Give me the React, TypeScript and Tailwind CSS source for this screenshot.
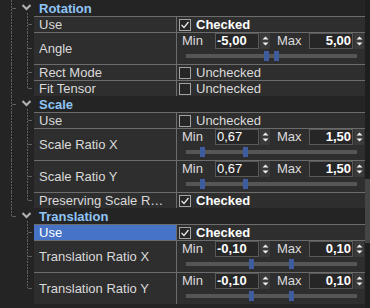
import React from "react";

type Range = { min: string; max: string; minBold: boolean; a: number; b: number };

type Row = {
  label: string;
  check?: boolean;
  selected?: boolean;
  range?: Range;
};

type Section = { title: string; last: boolean; rows: Row[] };

const sections: Section[] = [
  {
    title: "Rotation",
    last: false,
    rows: [
      { label: "Use", check: true },
      { label: "Angle", range: { min: "-5,00", max: "5,00", minBold: true, a: 78, b: 88 } },
      { label: "Rect Mode", check: false },
      { label: "Fit Tensor", check: false },
    ],
  },
  {
    title: "Scale",
    last: false,
    rows: [
      { label: "Use", check: false },
      { label: "Scale Ratio X", range: { min: "0,67", max: "1,50", minBold: false, a: 14, b: 57 } },
      { label: "Scale Ratio Y", range: { min: "0,67", max: "1,50", minBold: false, a: 14, b: 57 } },
      { label: "Preserving Scale Ratio", check: true },
    ],
  },
  {
    title: "Translation",
    last: true,
    rows: [
      { label: "Use", check: true, selected: true },
      { label: "Translation Ratio X", range: { min: "-0,10", max: "0,10", minBold: true, a: 63, b: 103 } },
      { label: "Translation Ratio Y", range: { min: "-0,10", max: "0,10", minBold: true, a: 63, b: 103 } },
    ],
  },
];

const LINE = "#5e5e5e";

const Chevron = ({ x }: { x: number }) => (
  <polyline
    points={`${x},5 ${x + 4},9 ${x + 8},5`}
    fill="none"
    stroke="#b4b4b4"
    strokeWidth="2"
  />
);

const HeaderGutter = ({ last }: { last: boolean }) => (
  <svg width="34" height="16" className="block shrink-0">
    <line x1="11.5" y1="0" x2="11.5" y2={last ? 8 : 16} stroke={LINE} strokeDasharray="2 1" />
    <line x1="12" y1="8.5" x2="16" y2="8.5" stroke={LINE} />
    <Chevron x={22.5} />
    <line x1="27.5" y1="13" x2="27.5" y2="16" stroke={LINE} strokeDasharray="2 1" />
  </svg>
);

const RowGutter = ({ h, outer, last }: { h: number; outer: boolean; last: boolean }) => (
  <svg width="34" height={h} className="block shrink-0">
    {outer && <line x1="11.5" y1="0" x2="11.5" y2={h} stroke={LINE} strokeDasharray="2 1" />}
    <line x1="27.5" y1="0" x2="27.5" y2={last ? h / 2 : h} stroke={LINE} strokeDasharray="2 1" />
    <line x1="28" y1={h / 2 + 0.5} x2="32" y2={h / 2 + 0.5} stroke={LINE} />
  </svg>
);

const CheckBox = ({ on }: { on: boolean }) => (
  <svg width="12" height="12" className="block shrink-0">
    <rect x="0.5" y="0.5" width="11" height="11" fill="#262626" stroke="#a2a2a2" />
    {on && <polyline points="2.5,6 5,8.5 9.5,3" fill="none" stroke="#e6e6e6" strokeWidth="1.3" />}
  </svg>
);

const Spinner = () => (
  <div className="w-[10px] h-[16px] ml-[1px] bg-[#3a3a3a] flex items-center justify-center">
    <svg width="7" height="10" className="block">
      <polygon points="0.5,3.5 3.5,0.5 6.5,3.5" fill="#f0f0f0" />
      <polygon points="0.5,6.5 3.5,9.5 6.5,6.5" fill="#f0f0f0" />
    </svg>
  </div>
);

const RangeCell = ({ r }: { r: Range }) => (
  <div className="flex flex-col">
    <div className="flex items-center h-[16px] pl-[5px] text-[13px] leading-[14px]">
      <span className="w-[33px] text-[#dcdcdc]">Min</span>
      <div
        className={`w-[44px] h-[16px] border border-[#595959] bg-[#262626] pl-[1px] text-white flex items-center ${
          r.minBold ? "font-bold" : "font-normal"
        }`}
      >
        {r.min}
      </div>
      <Spinner />
      <span className="w-[32px] ml-[7px] text-[#dcdcdc]">Max</span>
      <div className="w-[44px] h-[16px] border border-[#595959] bg-[#262626] pr-[1px] text-white font-bold flex items-center justify-end">
        {r.max}
      </div>
      <Spinner />
    </div>
    <div className="relative ml-[9px] mt-[5px] w-[171px] h-[4px] bg-[#565656]">
      <div className="absolute top-[-3px] w-[5px] h-[10px] bg-[#3e5d9c]" style={{ left: r.a }} />
      <div className="absolute top-[-3px] w-[5px] h-[10px] bg-[#3e5d9c]" style={{ left: r.b }} />
    </div>
  </div>
);

const PropRow = ({ row, outer, last }: { row: Row; outer: boolean; last: boolean }) => {
  const h = row.range ? 32 : 16;
  return (
    <div className="flex" style={{ height: h }}>
      <RowGutter h={h} outer={outer} last={last} />
      <div className="flex flex-1 border-t border-[#6c6c6c] bg-[#2e2e2e]">
        <div
          className={`w-[142px] shrink-0 pl-[5px] pr-[6px] flex items-center text-[13px] leading-[15px] ${
            row.selected ? "bg-[#4673c5] text-white" : "text-[#dadada]"
          }`}
        >
          <span className="truncate">{row.label}</span>
        </div>
        <div className="flex-1 border-l border-[#6c6c6c]">
          {row.range ? (
            <RangeCell r={row.range} />
          ) : (
            <div className="flex items-center h-full pl-[2px] gap-[5px] text-[13px] leading-[15px]">
              <CheckBox on={!!row.check} />
              <span className={row.check ? "font-bold text-white" : "text-[#dadada]"}>
                {row.check ? "Checked" : "Unchecked"}
              </span>
            </div>
          )}
        </div>
      </div>
    </div>
  );
};

export default function App() {
  return (
    <div className="w-[370px] h-[308px] overflow-hidden flex bg-[#242424] font-['Liberation_Sans',Arial,sans-serif]">
      <div className="w-[365px] shrink-0 flex flex-col">
        {sections.map((s) => (
          <div key={s.title} className="flex flex-col">
            <div className="flex h-[16px] items-center">
              <HeaderGutter last={s.last} />
              <span className="pl-[5px] text-[13px] leading-[15px] font-bold text-[#8fc4f6]">{s.title}</span>
            </div>
            {s.rows.map((row, i) => (
              <PropRow key={row.label + i} row={row} outer={!s.last} last={i === s.rows.length - 1} />
            ))}
          </div>
        ))}
        <div className="flex h-[16px] items-center">
          <svg width="18" height="16" className="block shrink-0">
            <Chevron x={7.5} />
          </svg>
          <span className="pl-[5px] text-[13px] leading-[15px] font-bold text-[#5b9be6]">Optimizer</span>
        </div>
      </div>
      <div className="w-[5px] h-full bg-[#1e1e1e]">
        <div className="mt-[179px] h-[64px] bg-[#454545]" />
      </div>
    </div>
  );
}
